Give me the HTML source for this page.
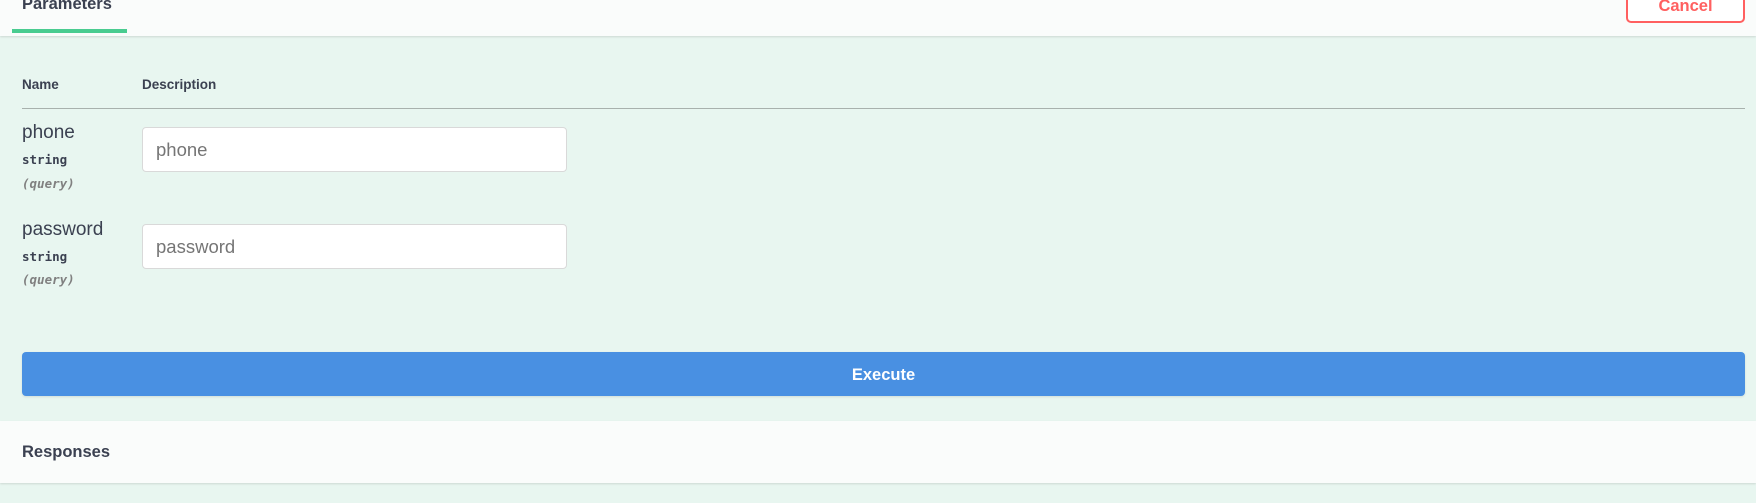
<!DOCTYPE html>
<html><head><style>
*{margin:0;padding:0;box-sizing:border-box}
body{width:1756px;height:503px;background:#e8f6f0;font-family:"Liberation Sans",sans-serif;color:#3b4151;position:relative;overflow:hidden}
.hdr{position:absolute;left:0;top:0;width:1756px;height:36px;background:#fafcfb;box-shadow:0 1px 2px rgba(0,0,0,.12)}
.tab{position:absolute;left:22px;top:-5px;font-size:16.5px;font-weight:bold}
.tabline{position:absolute;left:12px;top:29px;width:115px;height:4px;background:#49cc90}
.cancel{position:absolute;left:1626px;top:-12px;width:119px;height:35px;border:2px solid #ff6060;border-radius:5px;background:#fff;color:#ff6060;font-weight:bold;font-size:16.5px;text-align:center;line-height:32px}
.th{position:absolute;top:77px;font-size:13.5px;font-weight:bold}
.div{position:absolute;left:22px;top:108px;width:1723px;height:1px;background:#a8b1ad}
.lbl{position:absolute;left:22px;font-size:19px}
.mono{position:absolute;left:22px;font-family:"DejaVu Sans Mono","Liberation Mono",monospace;font-size:12.5px;font-weight:bold}
.q{position:absolute;left:22px;font-family:"DejaVu Sans Mono","Liberation Mono",monospace;font-size:12.5px;font-style:italic;color:#808080;font-weight:bold}
.inp{position:absolute;left:142px;width:425px;height:45px;background:#fff;border:1px solid #d9d9d9;border-radius:4px;font-size:18.5px;color:#757575;padding-left:13px;line-height:43px}
.exec{position:absolute;left:22px;top:352px;width:1723px;height:44px;background:#4990e2;border-radius:4px;color:#fff;font-weight:bold;font-size:16.5px;text-align:center;line-height:46px;box-shadow:0 1px 2px rgba(0,0,0,.1)}
.resp{position:absolute;left:0;top:421px;width:1756px;height:62px;background:#fafcfb;box-shadow:0 1px 2px rgba(0,0,0,.12)}
.resp span{position:absolute;left:22px;top:22px;font-size:16.5px;font-weight:bold}
</style></head><body>
<div class="hdr"><div class="tab">Parameters</div><div class="tabline"></div><div class="cancel">Cancel</div></div>
<div class="th" style="left:22px">Name</div>
<div class="th" style="left:142px">Description</div>
<div class="div"></div>
<div class="lbl" style="top:122px">phone</div>
<div class="mono" style="top:152px">string</div>
<div class="q" style="top:176px">(query)</div>
<div class="inp" style="top:127px">phone</div>
<div class="lbl" style="top:219px">password</div>
<div class="mono" style="top:249px">string</div>
<div class="q" style="top:272px">(query)</div>
<div class="inp" style="top:224px">password</div>
<div class="exec">Execute</div>
<div class="resp"><span>Responses</span></div>
</body></html>
